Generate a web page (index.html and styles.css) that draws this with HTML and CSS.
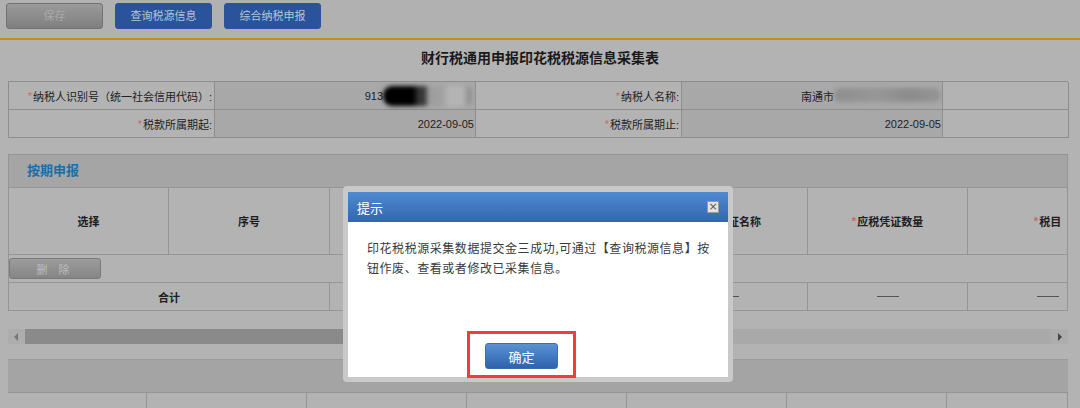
FILE: index.html
```html
<!DOCTYPE html>
<html lang="zh-CN">
<head>
<meta charset="utf-8">
<title>印花税税源信息采集表</title>
<link rel="stylesheet" href="styles.css">
</head>
<body>
<div class="page">
  <div class="toolbar">
    <button class="btn btn-gray">保存</button>
    <button class="btn btn-blue">查询税源信息</button>
    <button class="btn btn-blue">综合纳税申报</button>
  </div>
  <h1 class="title">财行税通用申报印花税税源信息采集表</h1>
  <div class="info">
    <div class="cell label"><span class="req">*</span>纳税人识别号（统一社会信用代码）:</div>
    <div class="cell value">913<span class="blur blur-id"></span></div>
    <div class="cell label"><span class="req">*</span>纳税人名称:</div>
    <div class="cell value">南通市<span class="blur blur-name"></span></div>
    <div class="cell"></div>
    <div class="cell label"><span class="req">*</span>税款所属期起:</div>
    <div class="cell value">2022-09-05</div>
    <div class="cell label"><span class="req">*</span>税款所属期止:</div>
    <div class="cell value">2022-09-05</div>
    <div class="cell"></div>
  </div>

  <section class="panel">
    <div class="panel-head">按期申报</div>
    <div class="panel-body">
      <div class="grid grid-head">
        <div class="gcell">选择</div>
        <div class="gcell">序号</div>
        <div class="gcell">应税凭证编号</div>
        <div class="gcell">应税凭证书立日期</div>
        <div class="gcell">应税凭证名称</div>
        <div class="gcell"><span class="req">*</span>应税凭证数量</div>
        <div class="gcell"><span class="req">*</span>税目</div>
      </div>
      <div class="tools"><button class="btn-del">删 除</button></div>
      <div class="grid grid-total">
        <div class="gcell span2">合计</div>
        <div class="gcell"><span class="dash"></span></div>
        <div class="gcell"><span class="dash"></span></div>
        <div class="gcell"><span class="dash"></span></div>
        <div class="gcell"><span class="dash"></span></div>
        <div class="gcell"><span class="dash"></span></div>
      </div>
    </div>
  </section>

  <div class="scrollbar">
    <span class="arrow arrow-left"></span>
    <span class="thumb"></span>
    <span class="track"></span>
    <span class="arrow arrow-right"></span>
  </div>

  <div class="panel2-head"></div>
  <div class="grid grid-bottom">
    <div class="gcell"></div>
    <div class="gcell"></div>
    <div class="gcell"></div>
    <div class="gcell"></div>
    <div class="gcell"></div>
    <div class="gcell"></div>
    <div class="gcell"></div>
  </div>
</div>

<div class="modal">
  <div class="modal-title">
    <span>提示</span>
    <span class="modal-close">×</span>
  </div>
  <div class="modal-body">
    <p class="modal-text">印花税税源采集数据提交金三成功,可通过【查询税源信息】按钮作废、查看或者修改已采集信息。</p>
    <div class="modal-foot">
      <button class="btn-ok">确定</button>
    </div>
  </div>
  <div class="mark"></div>
</div>
</body>
</html>
```

FILE: styles.css
```css
* { box-sizing: border-box; }
html, body {
  margin: 0;
  padding: 0;
  background: #b3b3b3;
  font-family: "Liberation Sans", "Noto Sans CJK SC", sans-serif;
  color: #1e1e1e;
  overflow: hidden;
}
.page {
  width: 1080px;
  height: 408px;
  position: relative;
}
button { font-family: inherit; }

.toolbar {
  height: 40px;
  padding: 3px 0 0 6px;
  display: flex;
  gap: 12px;
  background: #b1b1b1;
  border-bottom: 2px solid #c98a1c;
}
.btn {
  width: 97px;
  height: 26px;
  font-size: 11px;
  border-radius: 3px;
  padding: 0;
  line-height: 24px;
}
.btn-gray {
  background: linear-gradient(#9a9a9a, #7f7f7f);
  border: 1px solid #727272;
  color: #a9a9a9;
}
.btn-blue {
  background: #2a539b;
  border: 1px solid #2a539b;
  color: #b9c3d6;
}

.title {
  margin: 0;
  height: 41px;
  line-height: 36px;
  text-align: center;
  font-size: 14px;
  font-weight: bold;
  color: #1a1a1a;
}

.req { color: #c86868; margin-right: 1px; }

.info {
  margin: 0 12px 0 8px;
  display: grid;
  grid-template-columns: 206px 261px 206px 261px 126px;
  grid-auto-rows: 28px;
  border-top: 1px solid #8e8e8e;
  border-left: 1px solid #8e8e8e;
  font-size: 11px;
}
.cell {
  border-right: 1px solid #8e8e8e;
  border-bottom: 1px solid #8e8e8e;
  display: flex;
  align-items: center;
  justify-content: flex-end;
  padding-right: 2px;
  white-space: nowrap;
}
.label { color: #222; }
.value { background: #a8a8a8; color: #222; padding-right: 1px; }
.blur {
  display: inline-block;
  height: 20px;
  filter: blur(2px);
  border-radius: 9px;
}
.blur-id {
  width: 91px;
  background: linear-gradient(90deg, #000 0%, #000 34%, #333 38%, #3a3a3a 46%, #9c9c9c 50%, #a2a2a2 66%, #b4b4b4 72%, #b4b4b4 88%, #8c8c8c 95%, #a8a8a8 100%);
}
.blur-name {
  width: 107px;
  height: 14px;
  margin-top: -2px;
  background: linear-gradient(90deg, #8e8e8e 0%, #979797 40%, #8c8c8c 70%, #959595 100%);
}

.panel {
  margin: 16px 12px 0 8px;
  border: 1px solid #959595;
  border-bottom: none;
  overflow: hidden;
}
.panel-head {
  height: 33px;
  background: #a5a5a5;
  border-bottom: 1px solid #959595;
  color: #1b6ea8;
  font-size: 13px;
  font-weight: bold;
  line-height: 32px;
  padding-left: 18px;
}
.grid {
  display: grid;
  grid-template-columns: 160px 161px 160px 159px 159px 160px 160px;
  width: 1119px;
}
.gcell {
  border-right: 1px solid #959595;
  display: flex;
  align-items: center;
  justify-content: center;
  font-size: 11px;
  font-weight: bold;
  color: #1e1e1e;
  white-space: nowrap;
}
.span2 { grid-column: span 2; }
.grid-head {
  height: 67px;
  border-bottom: 1px solid #959595;
}
.tools {
  height: 28px;
  border-bottom: 1px solid #959595;
  padding: 3px 0 0 0;
}
.btn-del {
  display: block;
  width: 92px;
  height: 21px;
  border: 1px solid #7a7a7a;
  border-radius: 3px;
  background: linear-gradient(#9c9c9c, #858585);
  color: #bcbcbc;
  font-size: 11px;
  padding: 0;
  letter-spacing: 4px;
}
.grid-total {
  height: 28px;
  border-bottom: 1px solid #959595;
}
.dash {
  width: 22px;
  height: 1px;
  background: #555;
}

.scrollbar {
  margin: 18px 12px 0 8px;
  height: 15px;
  display: flex;
  background: #ababab;
}
.arrow {
  width: 17px;
  flex: none;
  position: relative;
  background: #adadad;
}
.arrow-left::after, .arrow-right::after {
  content: "";
  position: absolute;
  top: 4px;
  border-top: 4px solid transparent;
  border-bottom: 4px solid transparent;
}
.arrow-left::after { left: 6px; border-right: 4px solid #777; }
.arrow-right::after { left: 7px; border-left: 4px solid #444; }
.thumb { width: 580px; background: #8a8a8a; }
.track { flex: 1; background: #a9a9a9; }

.panel2-head {
  margin: 15px 12px 0 8px;
  height: 34px;
  background: #a4a4a4;
  border-top: 1px solid #9a9a9a;
  border-bottom: 1px solid #949494;
}
.grid-bottom {
  grid-template-columns: 139px 160px 160px 160px 160px 160px 121px;
  width: 1060px;
  margin-left: 8px;
  height: 20px;
}
.grid-bottom .gcell { border-right-color: #969696; }

.modal {
  position: absolute;
  left: 343px;
  top: 186px;
  width: 390px;
  height: 196px;
  background: #c9c9c9;
  border-radius: 4px;
  padding: 6px 5px 5px 5px;
  display: flex;
  flex-direction: column;
}
.modal-title {
  height: 30px;
  background: linear-gradient(#4f8bd0, #3266b0);
  color: #fff;
  font-size: 13px;
  display: flex;
  align-items: center;
  justify-content: space-between;
  padding: 0 9px 0 9px;
}
.modal-close {
  width: 12px;
  height: 12px;
  background: #e4e4e4;
  border: 1px solid #9a9a9a;
  color: #555;
  font-size: 11px;
  line-height: 9px;
  text-align: center;
  font-family: "DejaVu Sans", sans-serif;
}
.modal-body {
  flex: 1;
  background: #fff;
  display: flex;
  flex-direction: column;
  padding: 16px 16px 8px 19px;
}
.modal-text {
  margin: 0;
  font-size: 12px;
  line-height: 20px;
  letter-spacing: 0.55px;
  color: #3a3a3a;
  font-family: "Noto Sans CJK SC", sans-serif;
}
.modal-foot {
  margin-top: auto;
  padding-left: 118px;
}
.btn-ok {
  width: 73px;
  height: 26px;
  border: 1px solid #3d6db3;
  border-radius: 3px;
  background: linear-gradient(#5a92d4, #2f62ab);
  color: #fff;
  font-size: 13px;
  padding: 0;
}
.mark {
  position: absolute;
  left: 124px;
  top: 145px;
  width: 109px;
  height: 47px;
  border: 3px solid #f23d3d;
}
```
